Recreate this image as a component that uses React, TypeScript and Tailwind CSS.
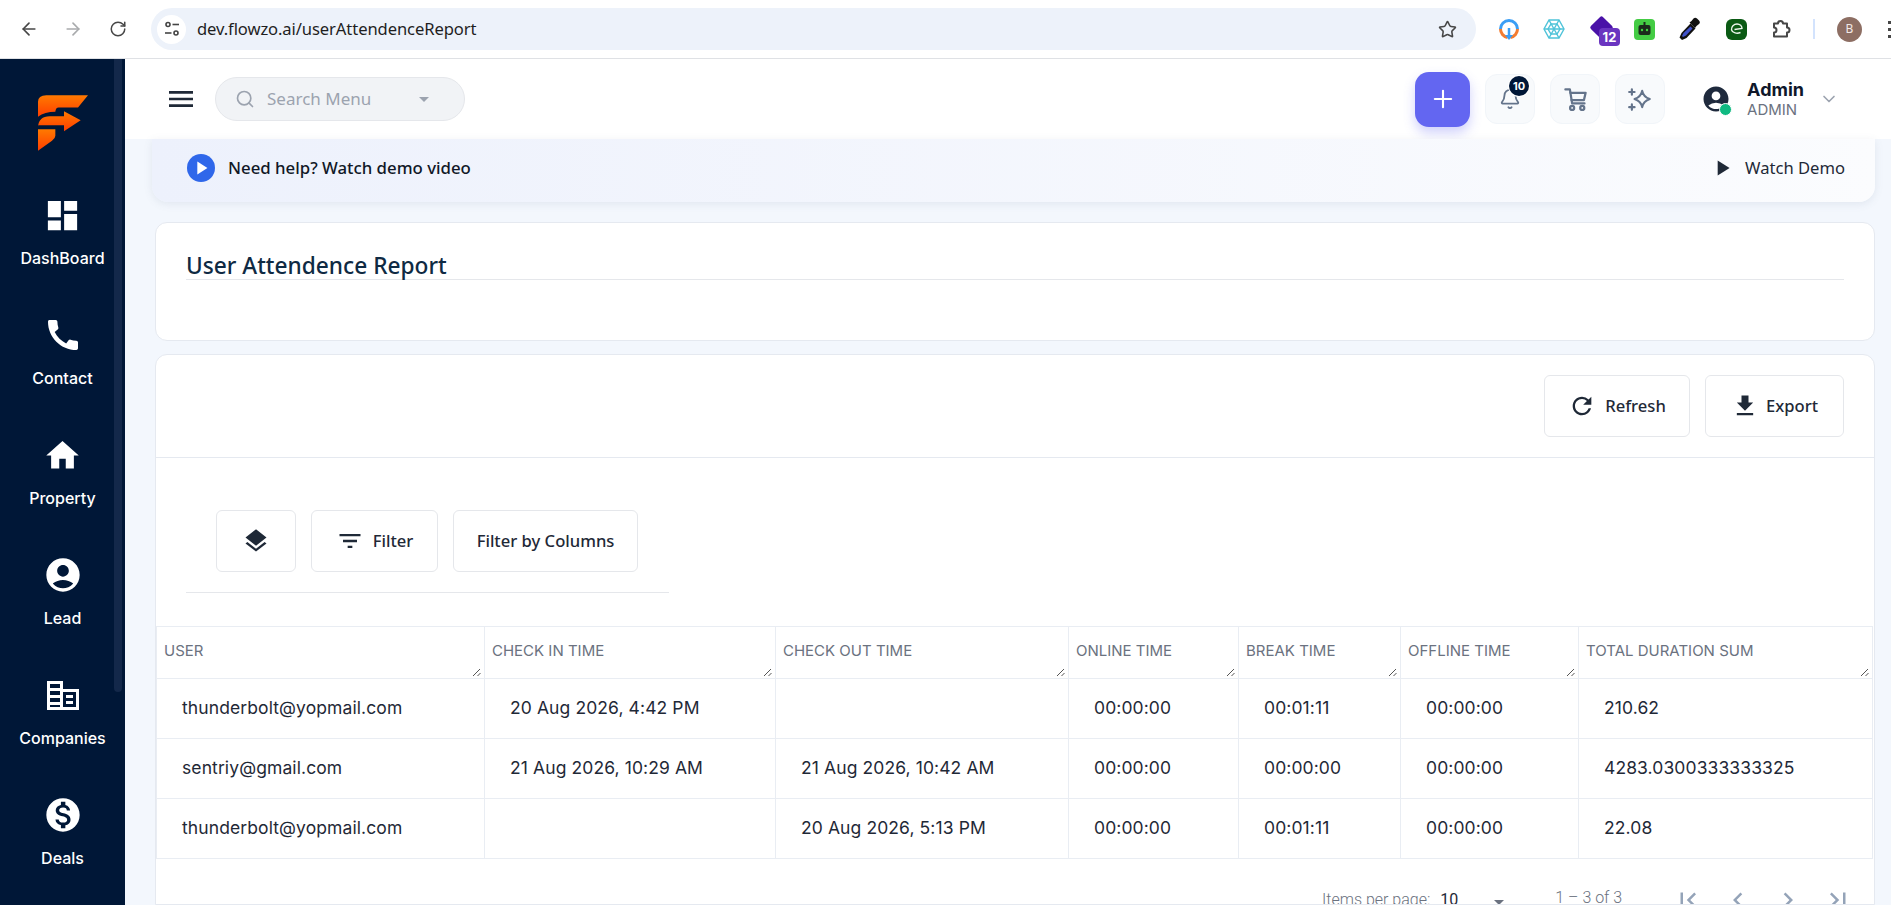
import React from "react";
import { Search, Bell, ChevronDown, Plus, Star, ArrowLeft, ArrowRight, RotateCw } from "lucide-react";
import { MdDashboard, MdHome, MdAccountCircle, MdMonetizationOn, MdLayers, MdFilterList, MdRefresh, MdFileDownload, MdMenu, MdFirstPage, MdLastPage, MdChevronLeft, MdChevronRight, MdArrowDropDown, MdPlayArrow } from "react-icons/md";

const inter = "font-['Inter',sans-serif]";
const noto = "font-['Noto_Sans',sans-serif]";

function Logo() {
  return (
    <svg width="50" height="56" viewBox="0 0 150 167">
      <defs>
        <linearGradient id="lg" x1="0" y1="0" x2="0" y2="1">
          <stop offset="0" stopColor="#ff7a00" />
          <stop offset="1" stopColor="#ff3d00" />
        </linearGradient>
      </defs>
      <path fill="url(#lg)" d="M0 65V20Q0 0 25 0H150L120 37H62Q53 37 52 50Q20 50 0 65Z" />
      <path fill="url(#lg)" d="M0 95Q2 63 35 63H78V48L128 75L78 108V90H0Z" />
      <path fill="url(#lg)" d="M0 102H52V122Q52 130 42 137L0 167Z" />
    </svg>
  );
}

function CompaniesIcon() {
  return (
    <svg width="32" height="29" viewBox="0 0 32 29" fill="white">
      <path fillRule="evenodd" d="M0 0H16V8H32V29H0ZM3 3V7H13V3ZM3 10V14H13V10ZM3 17V21H13V17ZM3 24V26H13V24ZM16 11V26H29V11Z" />
      <rect x="19" y="14" width="7" height="3" />
      <rect x="19" y="20" width="7" height="3" />
    </svg>
  );
}

function PhoneIcon() {
  return (
    <svg width="40" height="40" viewBox="0 0 24 24" fill="white">
      <path d="M20.01 15.38c-1.23 0-2.42-.2-3.53-.56-.35-.12-.74-.03-1.01.24l-1.57 1.97c-2.83-1.35-5.48-3.9-6.89-6.83l1.95-1.66c.27-.28.35-.67.24-1.02-.37-1.11-.56-2.3-.56-3.53 0-.54-.45-.99-.99-.99H4.19C3.65 3 3 3.24 3 3.99 3 13.28 10.73 21 20.01 21c.71 0 .99-.63.99-1.18v-3.45c0-.54-.45-.99-.99-.99z" />
    </svg>
  );
}

function NavItem({ icon, label }: { icon: React.ReactNode; label: string }) {
  return (
    <div className="h-[120px] flex flex-col items-center pt-[19px] shrink-0">
      <div className="h-[40px] flex items-center justify-center text-white">{icon}</div>
      <div className={`mt-[13px] text-white text-[16px] leading-[20px] font-medium ${inter}`}>{label}</div>
    </div>
  );
}

function Sidebar() {
  return (
    <aside className="relative w-[125px] shrink-0 bg-[#001737] overflow-hidden">
      <div className="flex justify-center pt-[36px] h-[117px]">
        <Logo />
      </div>
      <NavItem icon={<MdDashboard size={39} />} label="DashBoard" />
      <NavItem icon={<PhoneIcon />} label="Contact" />
      <NavItem icon={<MdHome size={39} />} label="Property" />
      <NavItem icon={<MdAccountCircle size={40} />} label="Lead" />
      <NavItem icon={<CompaniesIcon />} label="Companies" />
      <NavItem icon={<MdMonetizationOn size={40} />} label="Deals" />
      <div className="absolute right-[3px] top-0 w-[8px] h-[633px] bg-[#13284a] rounded-b-[4px]" />
    </aside>
  );
}

function ChromeBar() {
  return (
    <div className="h-[59px] shrink-0 bg-white border-b border-[#dfe1e5] flex items-center pl-[19px] relative">
      <ArrowLeft size={20} className="text-[#474747]" />
      <ArrowRight size={20} className="text-[#a9abad] ml-[24px]" />
      <RotateCw size={18} className="text-[#474747] ml-[26px]" />
      <div className="ml-[24px] w-[1325px] h-[42px] rounded-full bg-[#edf2fa] flex items-center pl-[6px] pr-[19px]">
        <div className="w-[29px] h-[29px] rounded-full bg-white flex items-center justify-center">
          <svg width="16" height="16" viewBox="0 0 16 16" fill="none" stroke="#444" strokeWidth="1.6">
            <circle cx="4" cy="3.5" r="2" />
            <path d="M8.5 3.5H15" />
            <path d="M1 12H7.5" />
            <circle cx="12" cy="12" r="2" />
          </svg>
        </div>
        <span className={`ml-[11px] text-[16.6px] text-[#1f1f1f] tracking-[-0.1px] ${noto}`}>dev.flowzo.ai/userAttendenceReport</span>
        <Star size={19} className="ml-auto text-[#474747]" />
      </div>
      <div className="flex items-center ml-[21px]">
        <div className="w-[24px] h-[24px] relative mr-[21px]">
          <svg width="24" height="24" viewBox="0 0 24 24" fill="none" strokeWidth="3">
            <path d="M3.5 12a8.5 8.5 0 0 1 17 0" stroke="#3b9ef5" />
            <path d="M3.5 12a8.5 8.5 0 0 0 7 8.4" stroke="#f47c30" />
            <path d="M20.5 12a8.5 8.5 0 0 1-7 8.4" stroke="#f47c30" />
            <path d="M12 11v8" stroke="#3b9ef5" strokeWidth="2.5" />
            <path d="M8 18l4 5 4-5z" fill="#3b9ef5" stroke="none" />
          </svg>
        </div>
        <div className="w-[24px] h-[24px] mr-[24px]">
          <svg width="24" height="24" viewBox="0 0 24 24" fill="none" stroke="#4fc3d9" strokeWidth="1.4">
            <path d="M7 3h10l5 9-5 9H7l-5-9z" />
            <path d="M9 7h6l3 5-3 5H9l-3-5z" />
            <path d="M2 12h20M7 3l10 18M17 3L7 21" />
          </svg>
        </div>
        <div className="w-[26px] h-[26px] relative mr-[18px]">
          <div className="absolute left-[3px] top-[3px] w-[17px] h-[17px] bg-[#4a12a8] rotate-45 rounded-[2px]" />
          <div className={`absolute left-[9px] top-[12px] w-[21px] h-[18px] rounded-[4px] bg-[#6a35c0] text-white text-[13px] leading-[18px] font-bold text-center ${inter}`}>12</div>
        </div>
        <div className="w-[21px] h-[21px] rounded-[4px] bg-[#44cc44] flex items-center justify-center mr-[23px]">
          <svg width="15" height="15" viewBox="0 0 15 15">
            <rect x="6.5" y="0" width="2" height="3" fill="#1b2a1b" />
            <rect x="1.5" y="3" width="12" height="10" rx="2" fill="#1b2a1b" />
            <circle cx="5" cy="8" r="1.2" fill="#3fd13f" />
            <circle cx="10" cy="8" r="1.2" fill="#3fd13f" />
          </svg>
        </div>
        <div className="w-[24px] h-[24px] mr-[24px]">
          <svg width="24" height="24" viewBox="0 0 24 24">
            <path d="M12.5 6.5l5 5-9 9.5-4.5 2-2.5-2.5 2-4.5z" fill="#111" />
            <path d="M12.5 9.5l2 2-6.5 7-3 1.5-1-1 1.500-3z" fill="#3f51c8" />
            <path d="M11.5 5.5l2-1.5 2-2.5a2.5 2.5 0 0 1 3.5 0l2 2a2.500 2.500 0 0 1 0 3.5l-2.500 2-1.500 2z" fill="#111" />
          </svg>
        </div>
        <div className="w-[21px] h-[21px] rounded-[6px] bg-[#0b5a14] flex items-center justify-center mr-[24px]">
          <svg width="16" height="16" viewBox="0 0 16 16" fill="none" stroke="#eef7ee" strokeWidth="1.4">
            <path d="M2.5 9C2 5.5 5 3 8 3c3 0 5 2 5 4.5L5.5 8.500" />
            <path d="M2.500 9c1 3 5.500 4 9 2.500" />
          </svg>
        </div>
        <svg width="20" height="20" viewBox="0 0 20 20" fill="none" stroke="#474747" strokeWidth="2" strokeLinejoin="round" className="mr-[22px]">
          <path d="M3 4.500h4a2.500 2.500 0 0 1 5 0h4v4a2.500 2.500 0 0 1 0 5v4H3v-4a2.300 2.300 0 0 0 0-5z" />
        </svg>
        <div className="w-[2px] h-[20px] bg-[#d3e3fd] mr-[22px]" />
        <div className={`w-[25px] h-[25px] rounded-full bg-[#8d6e63] text-[#f2e9e6] text-[12px] flex items-center justify-center ${noto}`}>B</div>
      </div>
      <div className="absolute right-[0px] top-[21px] flex flex-col gap-[4px]">
        <div className="w-[3px] h-[3px] bg-[#474747]" />
        <div className="w-[3px] h-[3px] bg-[#474747]" />
        <div className="w-[3px] h-[3px] bg-[#474747]" />
      </div>
    </div>
  );
}

function IconBtn({ children }: { children: React.ReactNode }) {
  return (
    <div className="w-[50px] h-[50px] rounded-[12px] bg-[#f8fafc] border border-[#f1f5f9] flex items-center justify-center relative text-[#64748b]">
      {children}
    </div>
  );
}

function CartIcon() {
  return (
    <svg width="27" height="27" viewBox="0 0 24 24" fill="none" stroke="#64748b" strokeWidth="2" strokeLinecap="round" strokeLinejoin="round">
      <path d="M3 3h4l2 12.5h11" />
      <path d="M7.400 6H21l-1.500 6.500H8.400" />
      <circle cx="9" cy="19.500" r="1.800" />
      <circle cx="18" cy="19.500" r="1.800" />
    </svg>
  );
}

function StarsIcon() {
  return (
    <svg width="26" height="26" viewBox="0 0 24 24" fill="none" stroke="#64748b" strokeWidth="2" strokeLinejoin="round" strokeLinecap="round">
      <path d="M14 4.500c.8 4 2.500 6 7 7.500-4.500 1.500-6.200 3.500-7 7.500-.8-4-2.500-6-7-7.500 4.500-1.500 6.200-3.500 7-7.500z" />
      <path d="M4.500 3v5M2 5.500h5" />
      <path d="M4.500 17v5M2 19.500h5" />
    </svg>
  );
}

function TopHeader() {
  return (
    <header className="h-[80px] shrink-0 bg-white flex items-center pl-[40px] pr-[52px]">
      <MdMenu size={32} className="text-[#1f2937] -mt-[1px]" />
      <div className="ml-[18px] w-[250px] h-[44px] rounded-full bg-[#f1f3f6] border border-[#e5e7eb] flex items-center pl-[19px]">
        <Search size={20} className="text-[#9ca3af]" />
        <span className={`ml-[12px] text-[17px] text-[#9ca3af] -mt-[1px] ${noto}`}>Search Menu</span>
        <MdArrowDropDown size={24} className="text-[#9ca3af] ml-[41px]" />
      </div>
      <div className="ml-auto flex items-center">
        <div className="w-[55px] h-[55px] rounded-[14px] bg-[#6366f1] flex items-center justify-center text-white shadow-[0_6px_12px_rgba(99,102,241,0.3)]">
          <Plus size={28} strokeWidth={1.8} />
        </div>
        <div className="ml-[15px]">
          <IconBtn>
            <Bell size={22} />
            <div className={`absolute left-[23px] top-[1px] w-[20px] h-[20px] rounded-full bg-[#001737] text-white text-[11px] leading-[20px] font-bold text-center shadow-[0_0_0_1px_#ffffff] ${inter}`}>10</div>
          </IconBtn>
        </div>
        <div className="ml-[15px]">
          <IconBtn><CartIcon /></IconBtn>
        </div>
        <div className="ml-[15px]">
          <IconBtn><StarsIcon /></IconBtn>
        </div>
        <div className="relative ml-[37px] w-[28px] h-[28px] flex items-center justify-center">
          <MdAccountCircle size={30} className="text-[#1f2a3d] shrink-0" />
          <div className="absolute right-[-2px] bottom-[-3px] w-[13px] h-[13px] rounded-full bg-[#10b981] border border-white" />
        </div>
        <div className={`ml-[17px] ${inter}`}>
          <div className="text-[18px] leading-[21px] font-bold text-[#0f172a]">Admin</div>
          <div className="text-[15px] leading-[20px] text-[#6b7280]">ADMIN</div>
        </div>
        <ChevronDown size={20} className="text-[#9ca3af] ml-[15px]" />
      </div>
    </header>
  );
}

function Banner() {
  return (
    <div className="h-[63px] ml-[27px] mr-[16px] rounded-b-[16px] bg-gradient-to-r from-[#edf1fc] to-[#fbfcfe] shadow-[0_2px_8px_rgba(100,116,139,0.12)] flex items-center pl-[35px] pr-[30px] pb-[5px] shrink-0">
      <div className="w-[28px] h-[28px] rounded-full bg-[#2f67ea] flex items-center justify-center text-white">
        <MdPlayArrow size={22} />
      </div>
      <span className={`ml-[13px] text-[16.8px] font-medium text-[#111827] ${noto}`}>Need help? Watch demo video</span>
      <MdPlayArrow size={26} className="ml-auto text-[#1f2937]" />
      <span className={`ml-[10px] text-[16.6px] text-[#1f2937] ${noto}`}>Watch Demo</span>
    </div>
  );
}

function Btn({ children, className }: { children: React.ReactNode; className: string }) {
  return (
    <div className={`h-[62px] rounded-[6px] border border-[#e5e7eb] bg-white flex items-center justify-center text-[#1f2937] text-[16.6px] font-medium ${noto} ${className}`}>
      {children}
    </div>
  );
}

const Resize = () => (
  <svg className="absolute right-[2px] bottom-[1px]" width="10" height="10" viewBox="0 0 10 10" stroke="#555" strokeWidth="1" fill="none">
    <path d="M1 9L8 2" />
    <path d="M5.500 9L8.500 6" />
  </svg>
);

const rows = [
  ["thunderbolt@yopmail.com", "20 Aug 2026, 4:42 PM", "", "00:00:00", "00:01:11", "00:00:00", "210.62"],
  ["sentriy@gmail.com", "21 Aug 2026, 10:29 AM", "21 Aug 2026, 10:42 AM", "00:00:00", "00:00:00", "00:00:00", "4283.0300333333325"],
  ["thunderbolt@yopmail.com", "", "20 Aug 2026, 5:13 PM", "00:00:00", "00:01:11", "00:00:00", "22.08"],
];
const heads = ["USER", "CHECK IN TIME", "CHECK OUT TIME", "ONLINE TIME", "BREAK TIME", "OFFLINE TIME", "TOTAL DURATION SUM"];

function DataTable() {
  return (
    <table className={`table-fixed w-[1716px] border-collapse ${inter}`}>
      <colgroup>
        <col className="w-[328px]" />
        <col className="w-[291px]" />
        <col className="w-[293px]" />
        <col className="w-[170px]" />
        <col className="w-[162px]" />
        <col className="w-[178px]" />
        <col className="w-[294px]" />
      </colgroup>
      <thead>
        <tr className="h-[52px]">
          {heads.map((h) => (
            <th key={h} className="relative border border-[#e9edf3] pl-[7px] pb-[2px] text-left align-middle text-[15px] font-normal text-[#6b7280]">
              {h}
              <Resize />
            </th>
          ))}
        </tr>
      </thead>
      <tbody>
        {rows.map((r, i) => (
          <tr key={i} className="h-[60px]">
            {r.map((c, j) => (
              <td key={j} className="border border-[#e9edf3] pl-[25px] text-[17.5px] tracking-[0.1px] text-[#1f2937]">{c}</td>
            ))}
          </tr>
        ))}
      </tbody>
    </table>
  );
}

function Pager() {
  return (
    <div className="h-[60px] flex items-start pt-[29px] pl-[1166px] text-[#6b7280] font-['Roboto',sans-serif] text-[16px] leading-[20px]">
      <span className="mt-[2px] font-light">Items per page:</span>
      <span className="ml-[10px] mt-[2px] text-[#1f2937]">10</span>
      <MdArrowDropDown size={24} className="ml-[29px] mt-[2px] text-[#6b7280]" />
      <span className="ml-[44px] font-light">1 – 3 of 3</span>
      <div className="ml-[51px] flex items-center gap-[20px] text-[#94a3b8] -mt-[3px]">
        <MdFirstPage size={30} />
        <MdChevronLeft size={30} />
        <MdChevronRight size={30} />
        <MdLastPage size={30} />
      </div>
    </div>
  );
}

export default function App() {
  return (
    <div className="h-[905px] w-[1891px] overflow-hidden flex flex-col bg-white">
      <ChromeBar />
      <div className="flex flex-1 min-h-0">
        <Sidebar />
        <main className="flex-1 min-w-0 flex flex-col bg-[#f3f7fd]">
          <TopHeader />
          <Banner />
          <section className="mt-[20px] ml-[30px] mr-[16px] h-[119px] shrink-0 rounded-[12px] border border-[#e5e9f0] bg-white px-[30px] pt-[27px]">
            <h1 className={`text-[22.7px] leading-[32px] font-medium text-[#0f2a43] border-b border-[#e5e7eb] h-[30px] ${noto}`}>User Attendence Report</h1>
          </section>
          <section className="mt-[13px] ml-[30px] mr-[16px] flex-1 rounded-t-[12px] border border-[#e5e9f0] bg-white overflow-hidden">
            <div className="h-[103px] border-b border-[#e5e9f0] flex items-start justify-end gap-[15px] pt-[20px] pr-[30px]">
              <Btn className="w-[146px]">
                <MdRefresh size={28} className="mr-[9px]" /> Refresh
              </Btn>
              <Btn className="w-[139px]">
                <MdFileDownload size={28} className="mr-[7px]" /> Export
              </Btn>
            </div>
            <div className="h-[135px] pl-[30px] pt-[52px]">
              <div className="w-[483px] h-[83px] border-b border-[#e5e7eb] flex items-start gap-[15px] pl-[30px]">
                <Btn className="w-[80px]"><MdLayers size={28} /></Btn>
                <Btn className="w-[127px]">
                  <MdFilterList size={28} className="mr-[9px]" /> Filter
                </Btn>
                <Btn className="w-[185px]">Filter by Columns</Btn>
              </div>
            </div>
            <div className="pt-[33px]">
              <DataTable />
            </div>
            <Pager />
          </section>
        </main>
      </div>
    </div>
  );
}
